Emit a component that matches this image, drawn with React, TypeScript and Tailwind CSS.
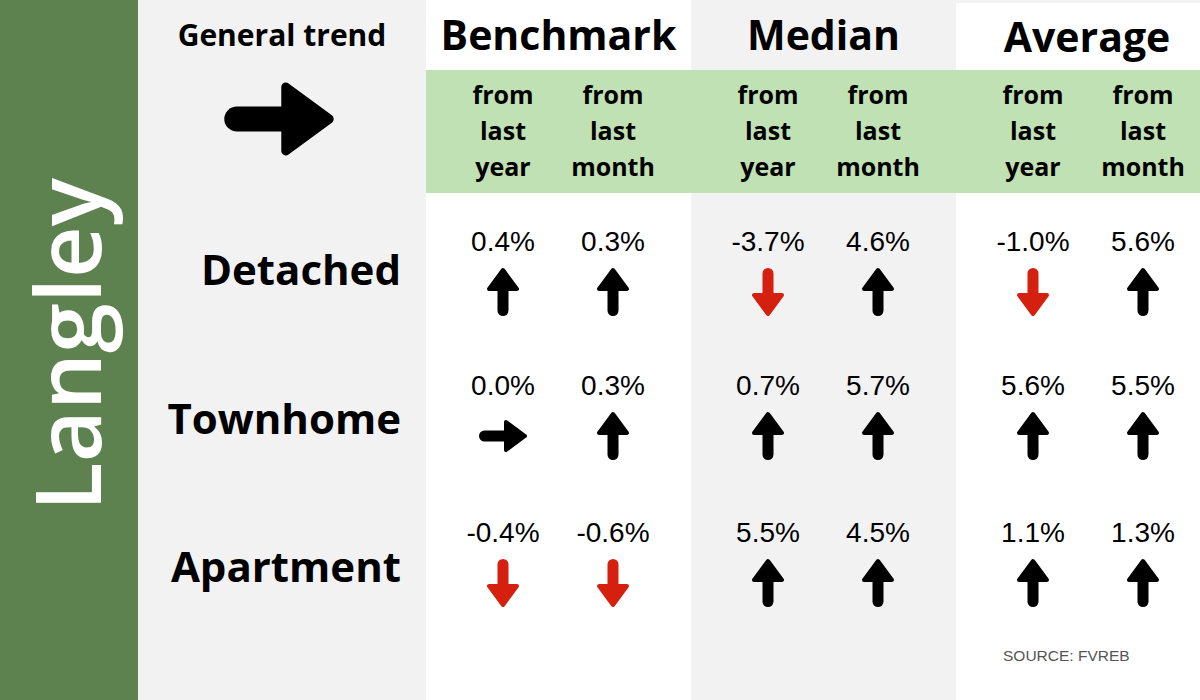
type Dir = 'up' | 'down' | 'right';

type Cell = { value: string; dir: Dir };

type Row = {
  label: string;
  labelPad: string;
  height: string;
  benchmark: [Cell, Cell];
  median: [Cell, Cell];
  average: [Cell, Cell];
};

const rows: Row[] = [
  {
    label: 'Detached',
    labelPad: 'pt-[52px]',
    height: 'h-[144px]',
    benchmark: [{ value: '0.4%', dir: 'up' }, { value: '0.3%', dir: 'up' }],
    median: [{ value: '-3.7%', dir: 'down' }, { value: '4.6%', dir: 'up' }],
    average: [{ value: '-1.0%', dir: 'down' }, { value: '5.6%', dir: 'up' }],
  },
  {
    label: 'Townhome',
    labelPad: 'pt-[57px]',
    height: 'h-[147px]',
    benchmark: [{ value: '0.0%', dir: 'right' }, { value: '0.3%', dir: 'up' }],
    median: [{ value: '0.7%', dir: 'up' }, { value: '5.7%', dir: 'up' }],
    average: [{ value: '5.6%', dir: 'up' }, { value: '5.5%', dir: 'up' }],
  },
  {
    label: 'Apartment',
    labelPad: 'pt-[58px]',
    height: 'h-[216px]',
    benchmark: [{ value: '-0.4%', dir: 'down' }, { value: '-0.6%', dir: 'down' }],
    median: [{ value: '5.5%', dir: 'up' }, { value: '4.5%', dir: 'up' }],
    average: [{ value: '1.1%', dir: 'up' }, { value: '1.3%', dir: 'up' }],
  },
];

function Arrow({ dir, size = 50 }: { dir: Dir; size?: number }) {
  const color = dir === 'down' ? '#d6200f' : '#000000';
  const turn = dir === 'down' ? 'rotate-180' : dir === 'right' ? 'rotate-90' : '';
  return (
    <svg width={size} height={size} viewBox="0 0 50 50" className={turn}>
      <polygon
        points="25,3 39,22 11,22"
        fill={color}
        stroke={color}
        strokeWidth={4}
        strokeLinejoin="round"
      />
      <rect x={19.5} y={18} width={11} height={31} rx={5.5} fill={color} />
    </svg>
  );
}

function Stat({ cell }: { cell: Cell }) {
  return (
    <div className="flex flex-col items-center">
      <div className="text-[28px] leading-[32px] text-black font-['Liberation_Sans',Arial,sans-serif]">
        {cell.value}
      </div>
      <div className="mt-[9px]">
        <Arrow dir={cell.dir} />
      </div>
    </div>
  );
}

function Pair({ cells }: { cells: [Cell, Cell] }) {
  return (
    <div className="grid grid-cols-[110px_110px] pl-[22px] pt-[33px]">
      <Stat cell={cells[0]} />
      <Stat cell={cells[1]} />
    </div>
  );
}

function SubHead() {
  return (
    <div className="grid grid-cols-[110px_110px] pl-[22px] pt-[6px] text-[25px] leading-[36px] font-bold text-black text-center">
      <div>
        from
        <br />
        last
        <br />
        year
      </div>
      <div>
        from
        <br />
        last
        <br />
        month
      </div>
    </div>
  );
}

export default function App() {
  const cols = 'grid grid-cols-[288px_265px_265px_244px]';
  return (
    <div className="flex w-[1200px] h-[700px] overflow-hidden bg-[#f2f2f2] font-['Open_Sans',sans-serif]">
      {/* city bar */}
      <div className="w-[138px] h-full bg-[#5e8150] flex items-center justify-center">
        <div className="[writing-mode:vertical-rl] rotate-180 text-white text-[90px] font-semibold leading-none -mt-[10px] mr-[6px]">
          Langley
        </div>
      </div>

      <div className="flex-1 flex flex-col">
        {/* titles */}
        <div className={`${cols} h-[70px]`}>
          <div className="flex items-center justify-center text-[30px] font-bold text-black pb-[2px]">
            General trend
          </div>
          <div className="bg-white flex items-center justify-center text-[41px] font-bold text-black">
            Benchmark
          </div>
          <div className="flex items-center justify-center text-[41px] font-bold text-black">
            Median
          </div>
          <div className="pt-[3px]">
            <div className="bg-white h-full flex items-center justify-center pl-[18px] text-[41px] font-bold text-black">
              Average
            </div>
          </div>
        </div>

        {/* sub headings band */}
        <div className={`${cols} h-[123px]`}>
          <div className="relative">
            <div className="absolute left-[84px] -top-[8px]">
              <Arrow dir="right" size={114} />
            </div>
          </div>
          <div className="bg-[#c0e1b4]">
            <SubHead />
          </div>
          <div className="bg-[#c0e1b4]">
            <SubHead />
          </div>
          <div className="bg-[#c0e1b4]">
            <SubHead />
          </div>
        </div>

        {/* data rows */}
        {rows.map((r, i) => (
          <div key={r.label} className={`${cols} ${r.height}`}>
            <div className={`${r.labelPad} pr-[25px] text-right text-[42px] leading-[48px] font-bold text-black`}>
              {r.label}
            </div>
            <div className="bg-white">
              <Pair cells={r.benchmark} />
            </div>
            <div>
              <Pair cells={r.median} />
            </div>
            <div className="bg-white flex flex-col">
              <Pair cells={r.average} />
              {i === rows.length - 1 && (
                <div className="mt-[38px] ml-[47px] text-[15.5px] leading-[20px] text-[#555555] font-['Liberation_Sans',Arial,sans-serif]">
                  SOURCE: FVREB
                </div>
              )}
            </div>
          </div>
        ))}
      </div>
    </div>
  );
}
